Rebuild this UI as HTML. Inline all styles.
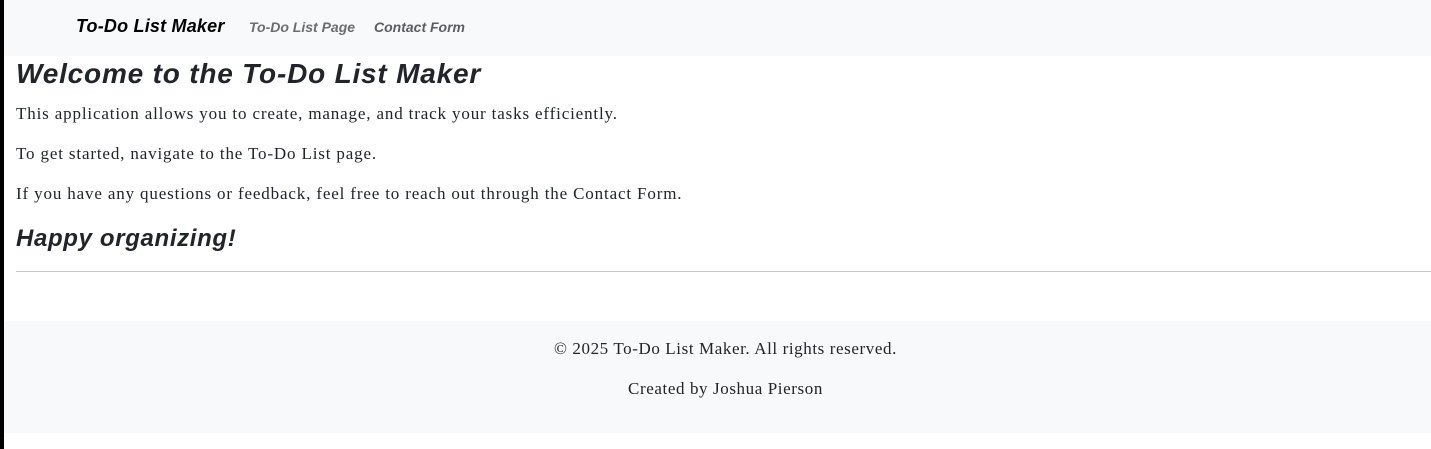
<!DOCTYPE html>
<html><head><meta charset="utf-8"><style>
html,body{margin:0;padding:0;}
body{width:1431px;height:449px;background:#fff;position:relative;overflow:hidden;font-family:"Liberation Serif",serif;color:#212529;}
.bar{position:absolute;left:0;top:0;width:4px;height:449px;background:#000;}
nav{position:absolute;left:4px;top:0;right:0;height:56px;background:#f8f9fa;}
.brand{position:absolute;left:72px;top:16px;font:italic bold 18px "Liberation Sans",sans-serif;color:#000;letter-spacing:0.2px;}
.l1{position:absolute;left:245px;top:19px;font:italic bold 14px "Liberation Sans",sans-serif;color:#6b6d70;}
.l2{position:absolute;left:370px;top:19px;font:italic bold 14px "Liberation Sans",sans-serif;color:#5a5d61;}
h1{position:absolute;left:16px;top:58px;margin:0;font:italic bold 28px "Liberation Sans",sans-serif;color:#212529;letter-spacing:0.8px;}
p{position:absolute;left:16px;margin:0;font-size:17px;letter-spacing:0.85px;}
h2{position:absolute;left:16px;top:225px;margin:0;font:italic bold 24px "Liberation Sans",sans-serif;letter-spacing:0.65px;}
hr{position:absolute;left:16px;right:0;top:271px;margin:0;border:0;border-top:1px solid #c8c8c8;}
footer{position:absolute;left:4px;right:0;top:321px;height:112px;background:#f8f9fa;}
footer div{position:absolute;left:16px;right:0;text-align:center;font-size:17px;letter-spacing:0.6px;}
</style></head><body>
<div class="bar"></div>
<nav><span class="brand">To-Do List Maker</span><span class="l1">To-Do List Page</span><span class="l2">Contact Form</span></nav>
<h1>Welcome to the To-Do List Maker</h1>
<p style="top:104px">This application allows you to create, manage, and track your tasks efficiently.</p>
<p style="top:144px">To get started, navigate to the To-Do List page.</p>
<p style="top:184px">If you have any questions or feedback, feel free to reach out through the Contact Form.</p>
<h2>Happy organizing!</h2>
<hr>
<footer><div style="top:18px">© 2025 To-Do List Maker. All rights reserved.</div><div style="top:58px">Created by Joshua Pierson</div></footer>
</body></html>
